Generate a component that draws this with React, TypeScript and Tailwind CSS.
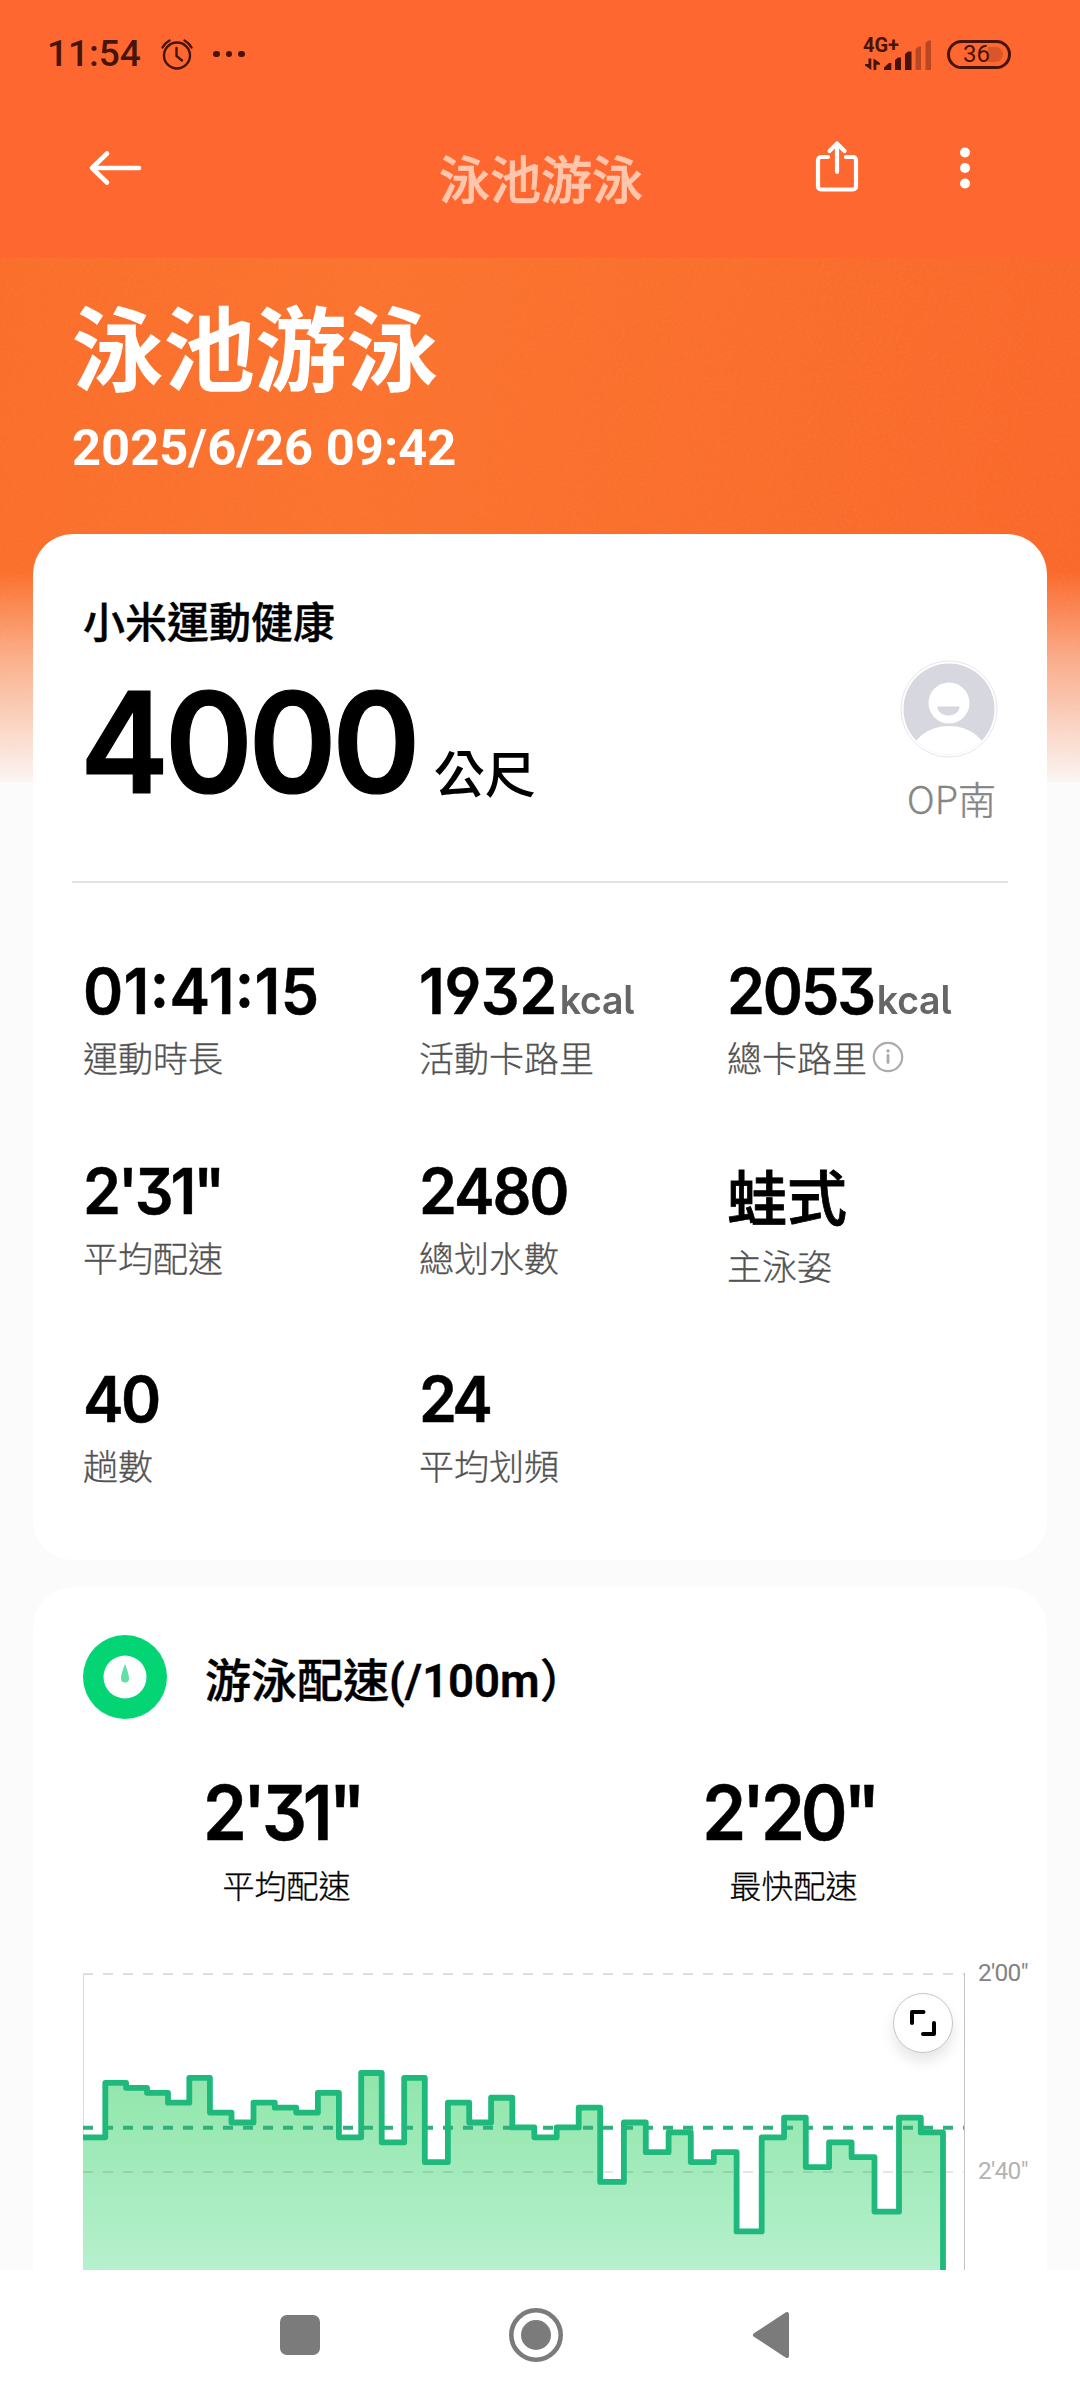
import React from 'react';

interface Stat {
  value: string;
  label: string;
  unit?: string;
  info?: boolean;
  isText?: boolean;
  tracking?: string;
}

const stats: Stat[] = [
  { value: '01:41:15', label: '運動時長', tracking: 'tracking-[0.4px]' },
  { value: '1932', unit: 'kcal', label: '活動卡路里', tracking: 'tracking-[-0.4px]' },
  { value: '2053', unit: 'kcal', label: '總卡路里', info: true, tracking: 'tracking-[-2.2px]' },
  { value: '2\'31"', label: '平均配速', tracking: 'tracking-[-3.2px]' },
  { value: '2480', label: '總划水數', tracking: 'tracking-[-2.2px]' },
  { value: '蛙式', label: '主泳姿', isText: true },
  { value: '40', label: '趟數' },
  { value: '24', label: '平均划頻', tracking: 'tracking-[-4px]' },
];

// Seconds above 2'00" for every 100 m
const laps = [
  33, 22, 23, 24, 26, 21, 28, 30, 26, 27, 28, 24, 33, 20, 34, 21, 38, 26, 30, 25,
  31, 33, 31, 27, 42, 30, 36, 32, 38, 36, 52, 33, 29, 39, 34, 37, 48, 29, 32,
];

const numberFont = "[font-family:Inter,'Noto_Sans_CJK_TC',sans-serif] [font-feature-settings:'cv09','cv04','cv05','calt']";
const cjkFont = "[font-family:'Noto_Sans_CJK_TC',sans-serif]";
const robotoFont = "[font-family:Roboto,'Noto_Sans_CJK_TC',sans-serif]";

const StatusBar: React.FC = () => (
  <div className={`flex h-[108px] items-center pl-[47px] pr-[69px] text-[#47140a] ${robotoFont}`}>
    <span className="w-[94px] whitespace-nowrap text-[37px] font-medium leading-[44px]">11:54</span>
    <svg className="ml-[19px]" width="34" height="34" viewBox="0 0 34 34" fill="none" stroke="currentColor" strokeWidth="2.4" strokeLinecap="round">
      <circle cx="17" cy="18.5" r="13" />
      <path d="M16.5 11v8l5.5 4.5" />
      <path d="M2.5 10.5a17 17 0 0 1 7-7M31.5 10.5a17 17 0 0 0-7-7" />
    </svg>
    <div className="ml-[19px] flex gap-[6px]">
      <span className="h-[6.5px] w-[6.5px] rounded-full bg-current" />
      <span className="h-[6.5px] w-[6.5px] rounded-full bg-current" />
      <span className="h-[6.5px] w-[6.5px] rounded-full bg-current" />
    </div>
    <svg className="ml-auto overflow-visible" width="70" height="40" viewBox="0 -2 70 40" fill="currentColor">
      <text x="0" y="16" fontSize="20" fontWeight="700" textLength="36" lengthAdjust="spacingAndGlyphs">4G+</text>
      <path d="M5.5 22.5h2.8v11.5L2 29.6V28h3.5zM10.5 34V22.5L17 27v1.8h-3.7V34z" />
      <path d="M21 34v-2.5l5-4.5h2.3v7z" />
      <path d="M32 34V24l3-2.5h3V34zM42 34V18l3-2.5h3.5V34z" />
      <path d="M52.5 34V13l3-2.5h2.5V34zM62.5 34V7l3-2.5h2.5V34z" opacity="0.38" />
    </svg>
    <div className="relative ml-[14px] flex h-[29px] w-[64px] items-center rounded-full border-[3px] border-current pl-[13px] text-[24px] leading-none">
      <span className="absolute right-[5px] top-[4px] h-[15px] w-[15px] rounded-r-full bg-current opacity-20" />
      36
    </div>
  </div>
);

const AppBar: React.FC = () => (
  <div className="flex h-[150px] items-start justify-between pl-[88px] pr-[110px] text-white">
    <svg className="mt-[42px]" width="54" height="36" viewBox="0 0 54 36" fill="none" stroke="currentColor" strokeWidth="4.6" strokeLinecap="round" strokeLinejoin="round">
      <path d="M51 18H4M19 3.5L4 18l15 14.5" />
    </svg>
    <div className={`ml-[125px] mt-[33px] w-[206px] whitespace-nowrap text-center text-[51px] font-medium leading-[72px] text-[#ffc6ac] [-webkit-text-stroke:0.7px_#ffc6ac] ${cjkFont}`}>
      泳池游泳
    </div>
    <div className="flex items-start gap-[101px] pt-[32px]">
      <svg width="44" height="52" viewBox="0 0 44 52" fill="none" stroke="currentColor" strokeWidth="4.2" strokeLinecap="round" strokeLinejoin="round">
        <path d="M13 17H6a3 3 0 0 0-3 3v26.500a3 3 0 0 0 3 3h32a3 3 0 0 0 3-3V20a3 3 0 0 0-3-3h-7" />
        <path d="M22 32V4M14.500 11L22 3.500l7.500 7.500" />
      </svg>
      <svg className="mt-[7px]" width="10" height="44" viewBox="0 0 10 44" fill="currentColor">
        <circle cx="5" cy="5.5" r="5" />
        <circle cx="5" cy="21" r="5" />
        <circle cx="5" cy="36.5" r="5" />
      </svg>
    </div>
  </div>
);

const StatCell: React.FC<{ stat: Stat }> = ({ stat }) => (
  <div>
    {stat.isText ? (
      <div className={`h-[72px] text-[60px] font-medium leading-[72px] [-webkit-text-stroke:0.8px_#000] ${cjkFont}`}>{stat.value}</div>
    ) : (
      <div className={`flex h-[64px] origin-left scale-x-96 items-baseline whitespace-nowrap leading-[64px] ${numberFont}`}>
        <span className={`text-[63.5px] font-semibold [-webkit-text-stroke:0.5px_#000] ${stat.tracking || 'tracking-[-2.8px]'}`}>{stat.value}</span>
        {stat.unit && (
          <span className="ml-[3px] text-[39px] font-semibold tracking-[-0.2px] text-[#666]">{stat.unit}</span>
        )}
      </div>
    )}
    <div className={`mt-[8px] flex h-[52px] items-center whitespace-nowrap text-[35px] font-light leading-[52px] text-[#525252] [-webkit-text-stroke:0.3px_#525252] ${cjkFont}`}>
      {stat.label}
      {stat.info && (
        <svg className="ml-[5px]" width="32" height="32" viewBox="0 0 32 32" fill="none" stroke="#ababab">
          <circle cx="16" cy="16" r="14.2" strokeWidth="2.2" />
          <path d="M16 14.5v7" strokeWidth="2.8" strokeLinecap="round" />
          <circle cx="16" cy="10" r="1.7" fill="#ababab" stroke="none" />
        </svg>
      )}
    </div>
  </div>
);

const Avatar: React.FC = () => (
  <svg width="98" height="98" viewBox="0 0 98 98">
    <defs>
      <clipPath id="avatar-clip">
        <circle cx="49" cy="49" r="45.5" />
      </clipPath>
    </defs>
    <circle cx="49" cy="49" r="48" fill="#fff" stroke="#e6e6ec" strokeWidth="1" />
    <g clipPath="url(#avatar-clip)">
      <rect width="98" height="98" fill="#d7d7e0" />
      <circle cx="49" cy="43" r="20.5" fill="#fff" />
      <path d="M37.5 46.5h22c0 5.5-5 9-11 9s-11-3.5-11-9z" fill="#d7d7e0" />
      <ellipse cx="49" cy="96" rx="38" ry="30" fill="#fff" />
    </g>
  </svg>
);

const SummaryCard: React.FC = () => (
  <section className="mx-[33px] h-[1026px] rounded-[40px] bg-white pt-[56px] text-black">
    <div className="flex justify-between pl-[50px] pr-[49px]">
      <div>
        <div className={`text-[42px] font-medium leading-[60px] [-webkit-text-stroke:0.4px_#000] ${cjkFont}`}>小米運動健康</div>
        <div className="mt-[22px] flex h-[140px] items-baseline whitespace-nowrap leading-[140px]">
          <span className={`-ml-[3px] origin-left scale-x-[0.955] text-[140px] font-semibold tracking-[-0.033em] [-webkit-text-stroke:1.2px_#000] ${numberFont}`}>4000</span>
          <span className={`ml-[2px] text-[51px] font-medium ${cjkFont}`}>公尺</span>
        </div>
      </div>
      <div className="flex flex-col items-center pt-[70px]">
        <Avatar />
        <div className={`mt-[15px] pl-[5px] text-[38px] font-light leading-[50px] text-[#858585] [-webkit-text-stroke:0.4px_#858585] ${cjkFont}`}>OP南</div>
      </div>
    </div>
    <div className="mx-[39px] mt-[58px] h-[2px] bg-[#e3e3e3]" />
    <div className="mt-[76px] grid grid-cols-[336px_308px_1fr] gap-y-[76px] pl-[50px]">
      {stats.map((stat) => (
        <StatCell key={stat.label} stat={stat} />
      ))}
    </div>
  </section>
);

const PaceChart: React.FC = () => {
  const width = 860;
  const total = laps.reduce((sum, lap) => sum + 120 + lap, 0);
  const yOf = (seconds: number) => 16 + seconds * 4.95;

  let x = 0;
  let line = `M0 ${yOf(laps[0])}`;
  laps.forEach((lap) => {
    line += ` V${yOf(lap)}`;
    x += ((120 + lap) / total) * width;
    line += ` H${x.toFixed(1)}`;
  });

  return (
    <div className="mt-[52px] flex h-[312px] overflow-hidden pl-[50px]">
      <div className="relative">
        <svg width="882" height="312" viewBox="0 0 882 312" fill="none">
          <defs>
            <linearGradient id="pace-fill" x1="0" y1="100" x2="0" y2="312" gradientUnits="userSpaceOnUse">
              <stop offset="0" stopColor="#8de5a8" />
              <stop offset="1" stopColor="#b6f0cd" />
            </linearGradient>
          </defs>
          <path d="M0.5 16V312" stroke="#dcdcdc" />
          <path d={`${line} V320 H0 Z`} fill="url(#pace-fill)" />
          <path d="M0 16H881" stroke="#dedede" strokeWidth="2" strokeDasharray="10 10" />
          <path d="M0 214H881" stroke="#000" strokeOpacity="0.2" strokeDasharray="10 10" />
          <path d="M0 169.7H881" stroke="#2fb17b" strokeWidth="4" strokeDasharray="10 10" />
          <path d={`${line} V320`} stroke="#1fb97b" strokeWidth="5.8" strokeLinejoin="round" />
          <path d="M881.5 15V312" stroke="#c4c4c4" />
        </svg>
        <button className="absolute left-[810px] top-[35px] flex h-[60px] w-[60px] items-center justify-center rounded-full border border-[#c6c6c6] bg-white shadow-[0_8px_14px_rgba(0,0,0,0.1)]">
          <svg width="28" height="28" viewBox="0 0 28 28" fill="none" stroke="#000" strokeWidth="4" strokeLinecap="round" strokeLinejoin="round">
            <path d="M3 14V3h11.5M14 25h11V14" />
          </svg>
        </button>
      </div>
      <div className={`ml-[13px] whitespace-nowrap text-[24.5px] leading-[28px] tracking-[-0.03em] ${robotoFont}`}>
        <div className="mt-[1px] text-[#838383]">2'00"</div>
        <div className="mt-[170px] text-[#b3b3b3]">2'40"</div>
      </div>
    </div>
  );
};

const PaceCard: React.FC = () => (
  <section className="mx-[33px] mt-[27px] h-[683px] rounded-t-[40px] bg-white pt-[48px] text-black">
    <div className="flex h-[84px] items-center pl-[50px]">
      <svg width="84" height="84" viewBox="0 0 84 84">
        <circle cx="42" cy="42" r="42" fill="#03d574" />
        <circle cx="42" cy="42" r="21.5" fill="#fff" />
        <path d="M42 29c1.5 4 4 10 4 14.5a4 4 0 0 1-8 0C38 39 40.5 33 42 29z" fill="#62dfa5" />
      </svg>
      <h2 className={`ml-[38px] whitespace-nowrap pt-[8px] text-[46px] font-medium leading-[60px] [-webkit-text-stroke:0.4px_#000] ${robotoFont}`}>
        游泳配速<span className="text-[45.5px] font-semibold">(/100m</span>）
      </h2>
    </div>
    <div className="mt-[54px] grid grid-cols-2 text-center">
      {[
        { value: '2\'31"', label: '平均配速' },
        { value: '2\'20"', label: '最快配速' },
      ].map((pace) => (
        <div key={pace.label}>
          <div className={`scale-x-94 pr-[9px] text-[75px] font-semibold leading-[80px] tracking-[-0.057em] [-webkit-text-stroke:0.5px_#000] ${numberFont}`}>{pace.value}</div>
          <div className={`mt-[9px] text-[32px] font-light leading-[44px] [-webkit-text-stroke:0.3px_#000] ${cjkFont}`}>{pace.label}</div>
        </div>
      ))}
    </div>
    <PaceChart />
  </section>
);

const NavBar: React.FC = () => (
  <nav className="flex h-[130px] items-center bg-white pl-[280px] text-[#7b7b7b]">
    <span className="h-[40px] w-[40px] rounded-[7px] bg-current" />
    <svg className="ml-[189px]" width="54" height="54" viewBox="0 0 54 54">
      <circle cx="27" cy="27" r="24.7" fill="none" stroke="currentColor" strokeWidth="4.6" />
      <circle cx="27" cy="27" r="15" fill="currentColor" />
    </svg>
    <svg className="ml-[189px]" width="38" height="48" viewBox="0 0 38 48" fill="currentColor" stroke="currentColor" strokeWidth="4" strokeLinejoin="round">
      <path d="M3 24L35 3v42z" />
    </svg>
  </nav>
);

export default function App() {
  return (
    <div className="relative h-[2400px] w-[1080px] overflow-hidden bg-[#fbfbfb]">
      {/* Grainy orange backdrop behind the title, fading out beside the first card */}
      <div className="absolute inset-x-0 top-0 h-[782px] bg-[linear-gradient(100deg,#fb6d2a_0%,#fc732f_35%,#fb6e2c_65%,#fa672a_100%)] [mask-image:linear-gradient(to_bottom,#000_0%,#000_73%,rgba(0,0,0,0.55)_84%,rgba(0,0,0,0.04)_100%)]">
        <svg className="h-full w-full opacity-[0.18]">
          <filter id="grain">
            <feTurbulence type="fractalNoise" baseFrequency="0.35" numOctaves="2" stitchTiles="stitch" />
            <feColorMatrix type="matrix" values="0 0 0 0 0.8  0 0 0 0 0.3  0 0 0 0 0.1  2.2 0 0 0 -0.9" />
          </filter>
          <rect width="100%" height="100%" filter="url(#grain)" />
        </svg>
      </div>
      <div className="relative flex flex-col">
        <header className="h-[258px] bg-[#ff6730]">
          <StatusBar />
          <AppBar />
        </header>
        <div className="h-[276px] pl-[72px] text-white">
          <h1 className={`pt-[20px] text-[91.5px] font-bold leading-[132px] ${cjkFont}`}>泳池游泳</h1>
          <div className={`mt-[5px] text-[50.7px] font-bold leading-[66px] ${robotoFont}`}>2025/6/26 09:42</div>
        </div>
        <SummaryCard />
        <PaceCard />
        <NavBar />
      </div>
    </div>
  );
}
